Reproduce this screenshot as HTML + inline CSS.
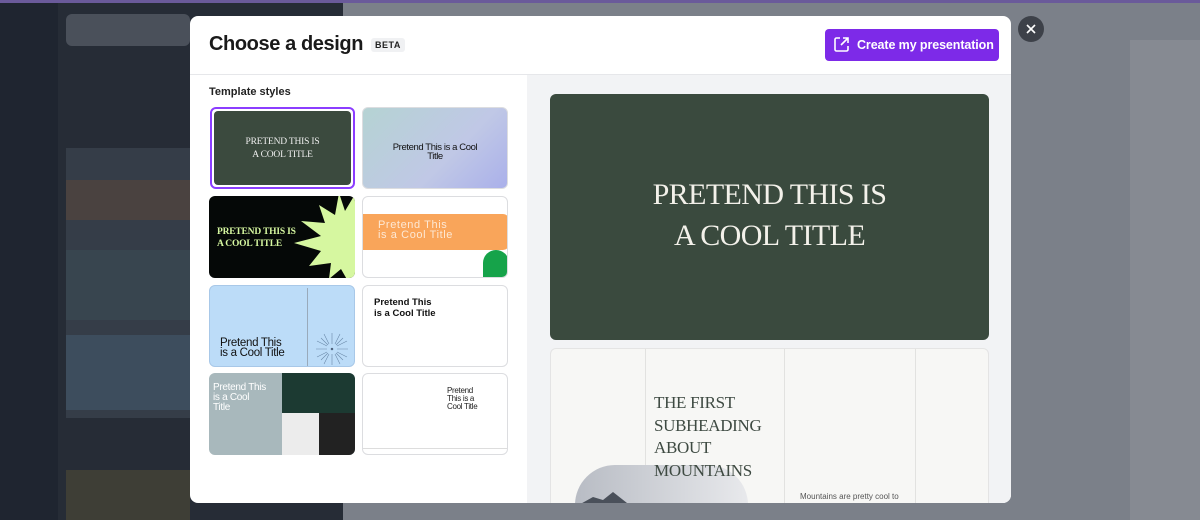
<!DOCTYPE html>
<html><head><meta charset="utf-8"><style>
*{margin:0;padding:0;box-sizing:border-box}
body{width:1200px;height:520px;overflow:hidden;position:relative;background:#7b8089;font-family:"Liberation Sans",sans-serif}
.abs{position:absolute}
.card{position:absolute;border-radius:6px;overflow:hidden;border:1px solid #dcdde0}
.serif{font-family:"Liberation Serif",serif}
</style></head><body>
<!-- background -->
<div class="abs" style="left:0;top:0;width:1200px;height:3px;background:#6a5a9a"></div>
<div class="abs" style="left:0;top:3px;width:58px;height:517px;background:#1f2530"></div>
<div class="abs" style="left:58px;top:3px;width:285px;height:517px;background:#262c36"></div>
<div class="abs" style="left:66px;top:14px;width:124px;height:32px;background:#4a505a;border-radius:6px"></div>
<div class="abs" style="left:66px;top:148px;width:124px;height:270px;background:#353d48"></div>
<div class="abs" style="left:66px;top:180px;width:124px;height:40px;background:#4a4240"></div>
<div class="abs" style="left:66px;top:250px;width:124px;height:70px;background:#38454f"></div>
<div class="abs" style="left:66px;top:335px;width:124px;height:75px;background:#3d4d5d"></div>
<div class="abs" style="left:66px;top:470px;width:124px;height:50px;background:#3e3e36"></div>
<div class="abs" style="left:343px;top:3px;width:857px;height:517px;background:#7b8089"></div>
<div class="abs" style="left:1130px;top:40px;width:70px;height:480px;background:#868a92"></div>
<!-- modal -->
<div class="abs" style="left:190px;top:16px;width:821px;height:487px;background:#fff;border-radius:8px;overflow:hidden">
  <div class="abs" style="left:19px;top:17px;font-size:20px;font-weight:bold;color:#1a1a1a;letter-spacing:-0.4px;white-space:nowrap">Choose a design</div>
  <div class="abs" style="left:181px;top:22px;padding:2px 4px;background:#f0f1f3;border-radius:3px;font-size:9px;font-weight:bold;color:#222;letter-spacing:0.5px">BETA</div>
  <div class="abs" style="left:635px;top:13px;width:174px;height:32px;background:#7d2ae8;border-radius:4px;color:#fff;font-size:12.5px;font-weight:bold;line-height:32px;padding-left:32px;white-space:nowrap;letter-spacing:-0.1px">Create my presentation
    <svg class="abs" style="left:8px;top:7px" width="17" height="17" viewBox="0 0 17 17" fill="none" stroke="#fff" stroke-width="1.6"><path d="M7 2H3.5A1.5 1.5 0 0 0 2 3.5v10A1.5 1.5 0 0 0 3.5 15h10a1.5 1.5 0 0 0 1.5-1.5V10"/><path d="M10 2h5v5M15 2L8 9"/></svg>
  </div>
  <div class="abs" style="left:0;top:58px;width:821px;height:1px;background:#e6e7ea"></div>
  <div class="abs" style="left:337px;top:59px;width:484px;height:428px;background:#f2f3f5"></div>
  <div class="abs" style="left:19px;top:70px;font-size:11px;font-weight:bold;color:#222">Template styles</div>
  <!-- second slide -->
  <div class="abs" style="left:360px;top:332px;width:439px;height:170px;background:#f7f7f5;border:1px solid #e4e4e4;border-radius:6px;overflow:hidden">
    <div class="abs" style="left:94px;top:0;width:1px;height:170px;background:#e2e2e0"></div>
    <div class="abs" style="left:233px;top:0;width:1px;height:170px;background:#e2e2e0"></div>
    <div class="abs" style="left:364px;top:0;width:1px;height:170px;background:#e2e2e0"></div>
    <div class="abs" style="left:24px;top:116px;width:173px;height:80px;border-radius:40px;background:linear-gradient(90deg,#b8bcc4,#e8e9ec)"></div>
    <svg class="abs" style="left:24px;top:138px" width="80" height="20"><polygon fill="#4a505a" points="0,20 18,10 28,13 38,5 52,16 64,20"/></svg>
    <div class="abs serif" style="left:103px;top:43px;font-size:17px;line-height:22.5px;color:#3e4a42;letter-spacing:-0.3px">THE FIRST<br>SUBHEADING<br>ABOUT<br>MOUNTAINS</div>
    <div class="abs" style="left:249px;top:143px;font-size:8px;color:#555;white-space:nowrap">Mountains are pretty cool to</div>
  </div>
</div>
<!-- cards -->
<div class="card" style="left:210px;top:107px;width:145px;height:82px;border:2px solid #8b3dff;padding:2px;background:#fff"><div style="width:100%;height:100%;background:#3b4a3e;border-radius:4px;color:#eee;text-align:center;font-family:'Liberation Serif',serif;font-size:9.5px;line-height:13px;padding-top:25px;letter-spacing:-0.2px">PRETEND THIS IS<br>A COOL TITLE</div></div>
<div class="card" style="left:362px;top:107px;width:146px;height:82px;background:linear-gradient(135deg,#b5d3d3,#c0c8e6 60%,#aab0ea);text-align:center;font-size:9.5px;line-height:9px;letter-spacing:-0.4px;color:#111;padding-top:35px">Pretend This is a Cool<br>Title</div>
<div class="card" style="left:209px;top:196px;width:146px;height:82px;background:#050807;border:none">
  <svg class="abs" style="left:60px;top:-5px" width="90" height="92" viewBox="0 0 90 92"><polygon fill="#d6f7a0" points="88,0 88,92 80,92 72,78 60,88 62,72 40,75 52,60 25,52 52,45 32,30 56,32 50,14 66,24 70,2 76,20" /></svg>
  <div class="abs serif" style="left:8px;top:30px;color:#d6f7a0;font-weight:bold;font-size:9.5px;line-height:12px;letter-spacing:-0.2px">PRETEND THIS IS<br>A COOL TITLE</div></div>
<div class="card" style="left:362px;top:196px;width:146px;height:82px;background:#fff">
  <div class="abs" style="left:0;top:17px;width:146px;height:36px;background:#f9a55a;border-radius:0 6px 6px 0"></div>
  <div class="abs" style="left:15px;top:23px;color:#fde8d4;font-size:11px;line-height:10px;letter-spacing:0.6px">Pretend This<br>is a Cool Title</div>
  <div class="abs" style="left:120px;top:53px;width:26px;height:30px;background:#16a34a;border-radius:13px 13px 0 0"></div></div>
<div class="card" style="left:209px;top:285px;width:146px;height:82px;background:#bcdcf8;border-color:#a8c8e8">
  <div class="abs" style="left:97px;top:2px;width:1px;height:78px;background:#9ab"></div>
  <div class="abs" style="left:10px;top:52px;font-size:11.5px;line-height:10px;color:#111;letter-spacing:-0.3px">Pretend This<br>is a Cool Title</div>
  <svg class="abs" style="left:104px;top:45px" width="36" height="36" viewBox="0 0 36 36" stroke="#6a88a8" stroke-width="0.6"><path d="M18 2V13M18 23V34M2 18H13M23 18H34M7 7l7 7M22 22l7 7M29 7l-7 7M14 22l-7 7M10 3l5 10M21 23l5 10M26 3l-5 10M15 23l-5 10M3 10l10 5M23 21l10 5M33 10l-10 5M13 21l-10 5"/><circle cx="18" cy="18" r="1" fill="#223"/></svg></div>
<div class="card" style="left:362px;top:285px;width:146px;height:82px;background:#fff"><div class="abs" style="left:11px;top:11px;font-size:9.5px;font-weight:bold;line-height:11px;color:#111">Pretend This<br>is a Cool Title</div></div>
<div class="card" style="left:209px;top:373px;width:146px;height:82px;background:#a8b8bc;border:none">
  <div class="abs" style="left:73px;top:0;width:73px;height:40px;background:#1c3a32"></div>
  <div class="abs" style="left:73px;top:40px;width:37px;height:42px;background:#ececec"></div>
  <div class="abs" style="left:110px;top:40px;width:36px;height:42px;background:#222"></div>
  <div class="abs" style="left:4px;top:10px;color:#fff;font-size:10px;line-height:10px;letter-spacing:-0.3px">Pretend This<br>is a Cool<br>Title</div></div>
<div class="card" style="left:362px;top:373px;width:146px;height:82px;background:#fff">
  <div class="abs" style="left:84px;top:13px;font-size:8px;line-height:8px;color:#222;letter-spacing:-0.3px">Pretend<br>This is a<br>Cool Title</div>
  <div class="abs" style="left:0;top:74px;width:146px;height:1px;background:#ddd"></div></div>
<!-- preview -->
<div class="abs" style="left:550px;top:94px;width:439px;height:246px;background:#3a4a3e;border-radius:6px;color:#f3f1ea;text-align:center;font-family:'Liberation Serif',serif;font-size:30px;line-height:41px;padding-top:80px;letter-spacing:-0.6px">PRETEND THIS IS<br>A COOL TITLE</div>
<!-- close -->
<div class="abs" style="left:1018px;top:16px;width:26px;height:26px;border-radius:13px;background:#3d4149"></div>
<svg class="abs" style="left:1026px;top:24px" width="10" height="10" stroke="#fff" stroke-width="1.6"><path d="M1 1l8 8M9 1l-8 8"/></svg>
</body></html>
